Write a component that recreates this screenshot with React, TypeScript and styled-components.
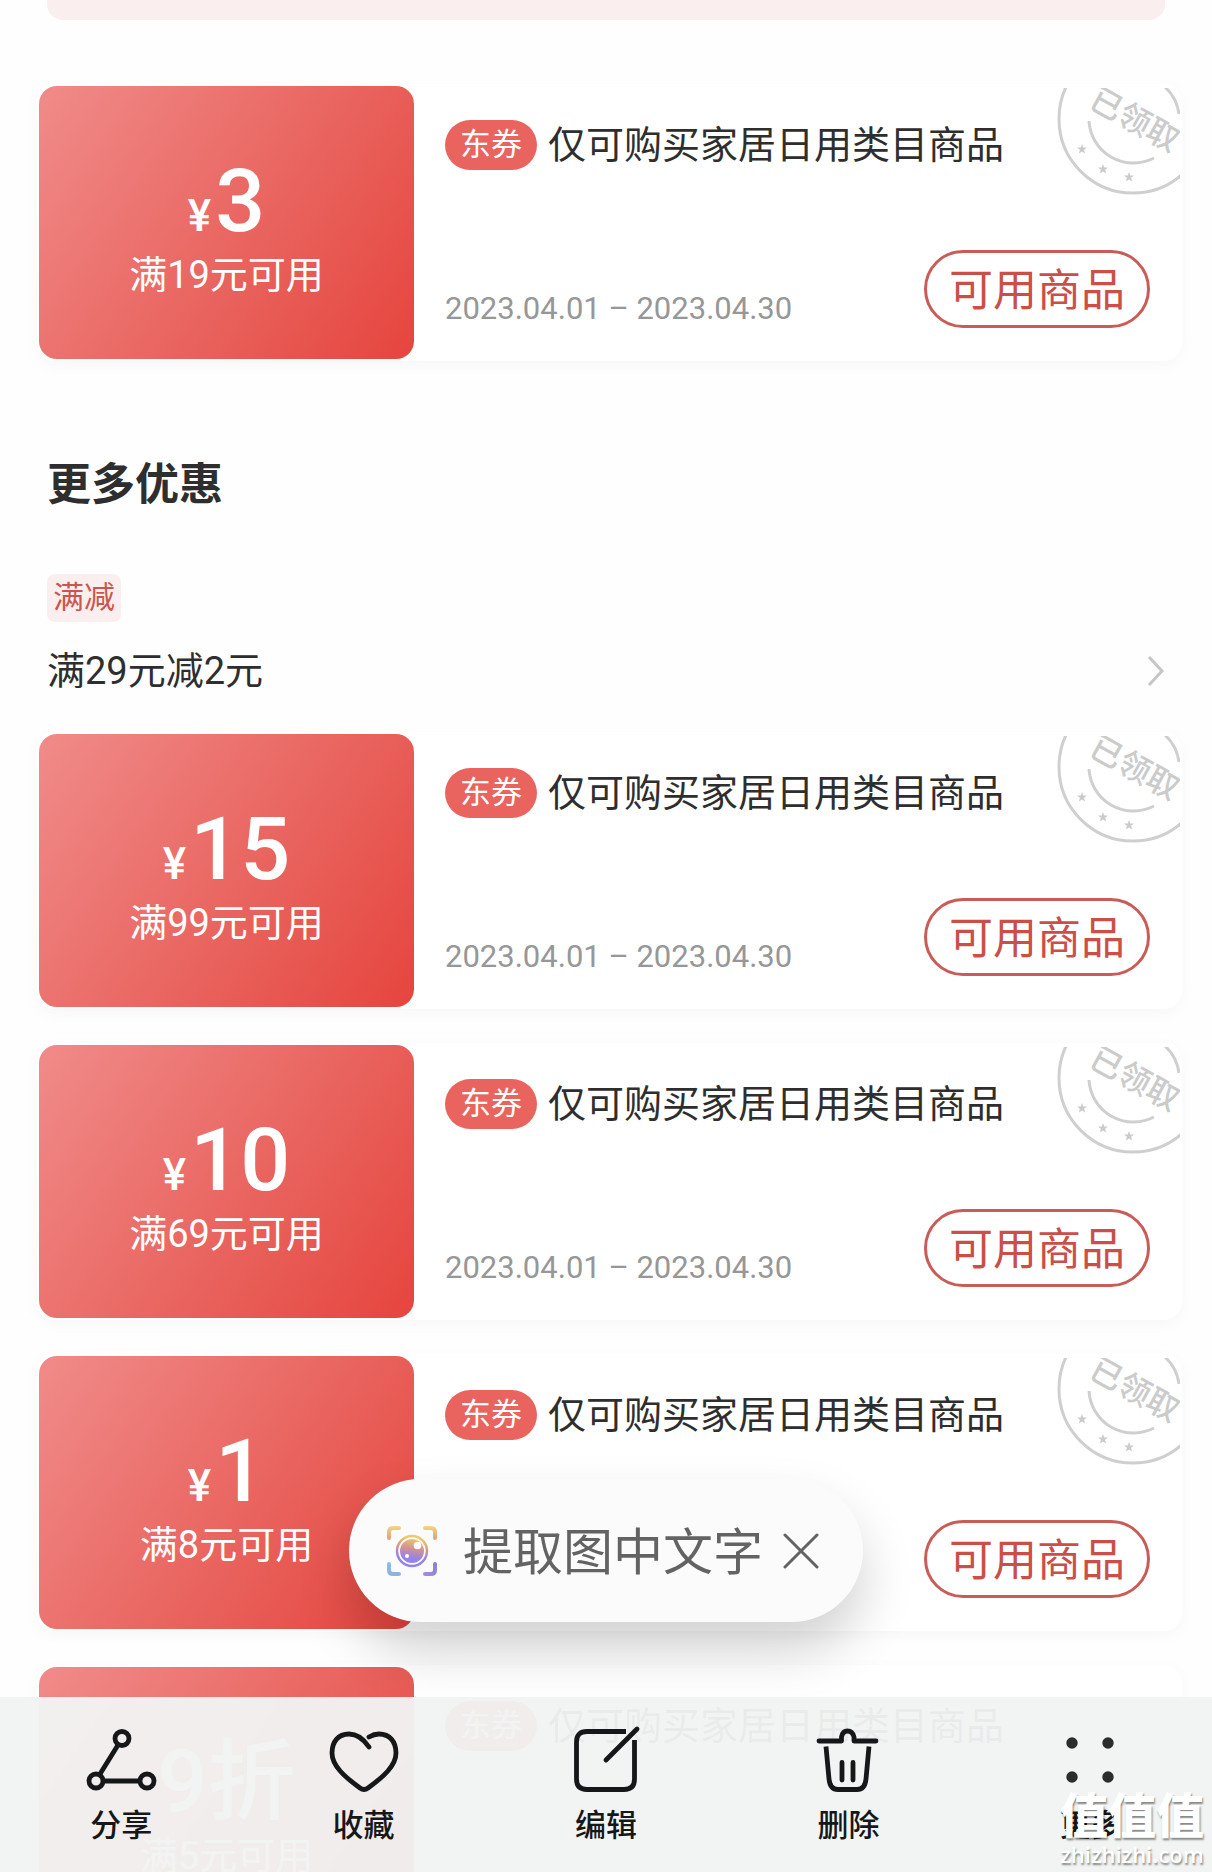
import React from "react";
import styled, { createGlobalStyle } from "styled-components";

const GlobalStyle = createGlobalStyle`
  *, *::before, *::after { box-sizing: border-box; }
  body {
    margin: 0;
    background: #fefefe;
    color: #2e2e2e;
    font-family: Roboto, "Noto Sans CJK SC", sans-serif;
  }
  button { font-family: inherit; cursor: pointer; }
  h2, p, ul { margin: 0; padding: 0; }
  ul { list-style: none; }
`;

const Screen = styled.div`
  position: relative;
  height: 100vh;
  overflow: hidden;
`;

const Content = styled.main`
  padding: 0 30px 0 37px;
`;

const Banner = styled.div`
  height: 20px;
  margin: 0 17px 64px 10px;
  border-radius: 0 0 16px 16px;
  background: #fbeeee;
`;

const SectionTitle = styled.h2`
  margin: 98px 10px 63px;
  font-size: 44px;
  line-height: 52px;
  font-weight: 700;
`;

const Promo = styled.section`
  margin: 0 17px 37px 10px;
`;

const PromoTag = styled.span`
  display: block;
  width: fit-content;
  padding: 0 6px;
  margin-bottom: 25px;
  border-radius: 8px;
  background: #fbeeee;
  color: #cb5650;
  font-size: 31px;
  line-height: 48px;
`;

const PromoLink = styled.a`
  display: flex;
  align-items: center;
  justify-content: space-between;
  color: inherit;
  text-decoration: none;
  font-size: 38px;
  line-height: 48px;
`;

const CouponList = styled.ul`
  display: flex;
  flex-direction: column;
  gap: 34px;
`;

const Card = styled.li`
  position: relative;
  display: flex;
  padding: 2px;
  border-radius: 18px;
  background: #fff;
  box-shadow: 0 4px 16px rgba(0, 0, 0, 0.03);
`;

const Value = styled.div`
  flex: 0 0 375px;
  min-height: 273px;
  padding-top: 69px;
  border-radius: 18px;
  background: linear-gradient(125deg, #f08a88 2%, #e9645f 56%, #e6463f 98%);
  color: #fff;
  text-align: center;
`;

const Price = styled.p`
  display: flex;
  justify-content: center;
  align-items: baseline;
  gap: 4px;
  margin-bottom: 6px;
  font-size: 88px;
  line-height: 92px;
  font-weight: 500;
`;

const Currency = styled.span`
  font-size: 44px;
  line-height: 44px;
`;

const Condition = styled.p`
  font-size: 38px;
  line-height: 44px;
`;

const Body = styled.div`
  flex: 1;
  display: flex;
  flex-direction: column;
  justify-content: space-between;
  padding: 34px 30px 31px 31px;
`;

const TitleRow = styled.div`
  display: flex;
  align-items: center;
  gap: 11px;
`;

const Badge = styled.span`
  padding: 0 15px;
  border-radius: 25px;
  background: #e9645f;
  color: #fff;
  font-size: 31px;
  line-height: 50px;
  white-space: nowrap;
`;

const CouponTitle = styled.span`
  font-size: 38px;
  line-height: 48px;
`;

const FootRow = styled.div`
  display: flex;
  align-items: flex-end;
  justify-content: space-between;
`;

const Dates = styled.span`
  color: #979797;
  font-size: 31px;
  line-height: 38px;
`;

const UseButton = styled.button`
  height: 78px;
  padding: 3px 22px 0;
  border: 3px solid #ca5c57;
  border-radius: 39px;
  background: #fff;
  color: #ca4f49;
  font-size: 44px;
  line-height: 52px;
`;

const StampBox = styled.svg`
  position: absolute;
  top: 4px;
  right: 2px;
`;

const Toast = styled.div`
  position: absolute;
  bottom: 250px;
  left: 50%;
  transform: translateX(-50%);
  display: flex;
  align-items: center;
  height: 143px;
  padding: 0 40px 0 37px;
  border-radius: 72px;
  background: #fbfbfb;
  box-shadow: 0 28px 52px rgba(0, 0, 0, 0.18);
`;

const ToastAction = styled.button`
  display: flex;
  align-items: center;
  gap: 25px;
  padding: 0;
  border: 0;
  background: none;
  color: #636363;
  font-size: 50px;
  line-height: 60px;
  white-space: nowrap;
`;

const ToastLabel = styled.span`
  padding-top: 4px;
`;

const ToastClose = styled.button`
  display: flex;
  margin-left: 16px;
  padding: 4px;
  border: 0;
  background: none;
`;

const Toolbar = styled.nav`
  position: absolute;
  left: 0;
  right: 0;
  bottom: 0;
  display: flex;
  height: 175px;
  background: rgba(241, 243, 244, 0.955);
`;

const Tool = styled.button`
  flex: 1;
  display: flex;
  flex-direction: column;
  align-items: center;
  gap: 16px;
  padding: 29px 0 0;
  border: 0;
  background: none;
  color: #151719;
  font-size: 31px;
  line-height: 36px;
  font-weight: 500;
`;

const Watermark = styled.div`
  position: absolute;
  right: 8px;
  bottom: 5px;
  color: #fff;
  text-align: center;
  text-shadow: 1px 2px 2px rgba(0, 0, 0, 0.45);
  pointer-events: none;
`;

const WatermarkName = styled.div`
  font-size: 48px;
  line-height: 48px;
  font-weight: 900;
`;

const WatermarkSite = styled.div`
  font-family: "Open Sans", sans-serif;
  font-size: 22px;
  line-height: 26px;
  font-weight: 600;
`;

const STAR = "M0-5 1.3-1.6 5-1.4 2.1.8 3.1 4.5 0 2.4-3.1 4.5-2.1.8-5-1.4-1.3-1.6Z";

function Stamp() {
  return (
    <StampBox width="124" height="110" viewBox="0 0 124 110" aria-label="已领取">
      <g fill="none" stroke="#cfcfcf" strokeWidth="3">
        <circle cx="77" cy="31" r="74" />
        <path d="M33 33A44.5 44.5 0 0 0 98 70" />
        <path d="M109-1A45 45 0 0 1 123 26" />
      </g>
      <g fill="#cbcbcb">
        <path transform="translate(26 61)" d={STAR} />
        <path transform="translate(47 81)" d={STAR} />
        <path transform="translate(73 89)" d={STAR} />
        <text transform="translate(79 31) rotate(29)" y="12" textAnchor="middle" fontSize="32" fontWeight="500">
          已领取
        </text>
      </g>
    </StampBox>
  );
}

type CouponData = { amount: string; discount?: boolean; condition: string; claimed: boolean };

function Coupon({ amount, discount, condition, claimed }: CouponData) {
  return (
    <Card>
      <Value>
        <Price>
          {!discount && <Currency>¥</Currency>}
          <span>{amount}</span>
        </Price>
        <Condition>{condition}</Condition>
      </Value>
      <Body>
        <TitleRow>
          <Badge>东券</Badge>
          <CouponTitle>仅可购买家居日用类目商品</CouponTitle>
        </TitleRow>
        {claimed && (
          <FootRow>
            <Dates>2023.04.01 – 2023.04.30</Dates>
            <UseButton type="button">可用商品</UseButton>
          </FootRow>
        )}
      </Body>
      {claimed && <Stamp />}
    </Card>
  );
}

const coupons: CouponData[] = [
  { amount: "15", condition: "满99元可用", claimed: true },
  { amount: "10", condition: "满69元可用", claimed: true },
  { amount: "1", condition: "满8元可用", claimed: true },
  { amount: "9折", discount: true, condition: "满5元可用", claimed: false },
];

function ScanIcon() {
  return (
    <svg width="52" height="52" viewBox="0 0 52 52" fill="none" aria-hidden="true">
      <defs>
        <linearGradient id="frame" x1="26" y1="0" x2="26" y2="52" gradientUnits="userSpaceOnUse">
          <stop offset="0" stopColor="#f6da83" />
          <stop offset="0.25" stopColor="#dfa57e" />
          <stop offset="0.7" stopColor="#8cc0e6" />
          <stop offset="1" stopColor="#8fb0dc" />
        </linearGradient>
        <linearGradient id="corner" x1="40" y1="52" x2="52" y2="38" gradientUnits="userSpaceOnUse">
          <stop stopColor="#a58be0" />
          <stop offset="1" stopColor="#8580cc" />
        </linearGradient>
        <linearGradient id="lens" x1="29" y1="13" x2="25" y2="38" gradientUnits="userSpaceOnUse">
          <stop stopColor="#f3c865" />
          <stop offset="0.45" stopColor="#cf9196" />
          <stop offset="0.8" stopColor="#9583ea" />
        </linearGradient>
      </defs>
      <g strokeWidth="4" strokeLinecap="round">
        <path stroke="url(#frame)" d="M3 13V7Q3 3 7 3H13M39 3H45Q49 3 49 7V13M3 39V45Q3 49 7 49H13" />
        <path stroke="url(#corner)" d="M39 49H45Q49 49 49 45V39" />
      </g>
      <circle cx="26" cy="26" r="15" stroke="url(#lens)" strokeWidth="2.500" />
      <circle cx="26" cy="26" r="12" fill="url(#lens)" />
      <circle cx="31.500" cy="20.500" r="3.800" fill="#fff" />
      <circle cx="21" cy="31" r="2" fill="#fff" />
    </svg>
  );
}

const tools = [
  {
    label: "分享",
    icon: (
      <>
        <path d="M33 19 15 48M19 55H54" />
        <circle cx="37" cy="12.500" r="7" />
        <circle cx="11" cy="55" r="7" />
        <circle cx="62" cy="55" r="7" />
      </>
    ),
  },
  {
    label: "收藏",
    icon: (
      <path d="M41 21C35 12 29 8 21 8C10 8 4 16 4 27C4 40 17 51 32 62Q36 65 40 62C55 51 68 40 68 27C68 16 62 8 51 8Q46 8 41 11" />
    ),
  },
  {
    label: "编辑",
    icon: (
      <>
        <path strokeLinecap="butt" d="M56 5.500H17Q6.500 5.500 6.500 16V53Q6.500 63.500 17 63.500H54Q64.500 63.500 64.500 53V14" />
        <path d="M36 34 67 3" />
      </>
    ),
  },
  {
    label: "删除",
    icon: (
      <>
        <path d="M7 15H29.500V11C31 3 40 3 42 11V15H64" />
        <path strokeLinecap="butt" d="M14 20.500 17 53Q18 63.500 26 63.500H45Q53 63.500 54 53L57 20.500" />
        <path d="M30 36.500V54M41 36.500V54" />
      </>
    ),
  },
  {
    label: "更多",
    icon: (
      <g fill="#2a2c2e" stroke="none">
        <circle cx="17" cy="17" r="5.700" />
        <circle cx="53" cy="17" r="5.700" />
        <circle cx="17" cy="51" r="5.700" />
        <circle cx="53" cy="51" r="5.700" />
      </g>
    ),
  },
];

export default function App() {
  return (
    <>
      <GlobalStyle />
      <Screen>
        <Content>
          <Banner />
          <CouponList>
            <Coupon amount="3" condition="满19元可用" claimed />
          </CouponList>
          <SectionTitle>更多优惠</SectionTitle>
          <Promo>
            <PromoTag>满减</PromoTag>
            <PromoLink href="#promo">
              满29元减2元
              <svg width="18" height="32" viewBox="0 0 18 32" fill="none" stroke="#c6c6c6" strokeWidth="3" aria-hidden="true">
                <path d="M2 2 15 16 2 30" />
              </svg>
            </PromoLink>
          </Promo>
          <CouponList>
            {coupons.map((c) => (
              <Coupon key={c.condition} {...c} />
            ))}
          </CouponList>
        </Content>
        <Toast>
          <ToastAction type="button">
            <ScanIcon />
            <ToastLabel>提取图中文字</ToastLabel>
          </ToastAction>
          <ToastClose type="button" aria-label="关闭">
            <svg width="36" height="36" viewBox="0 0 36 36" fill="none" stroke="#636363" strokeWidth="3" strokeLinecap="round">
              <path d="M2 2 34 34M34 2 2 34" />
            </svg>
          </ToastClose>
        </Toast>
        <Toolbar>
          {tools.map(({ label, icon }) => (
            <Tool key={label} type="button">
              <svg width="72" height="66" viewBox="0 0 72 66" overflow="visible" fill="none" stroke="#151719" strokeWidth="4.800" strokeLinecap="round" strokeLinejoin="round" aria-hidden="true">
                {icon}
              </svg>
              {label}
            </Tool>
          ))}
        </Toolbar>
        <Watermark>
          <WatermarkName>值值值</WatermarkName>
          <WatermarkSite>zhizhizhi.com</WatermarkSite>
        </Watermark>
      </Screen>
    </>
  );
}
